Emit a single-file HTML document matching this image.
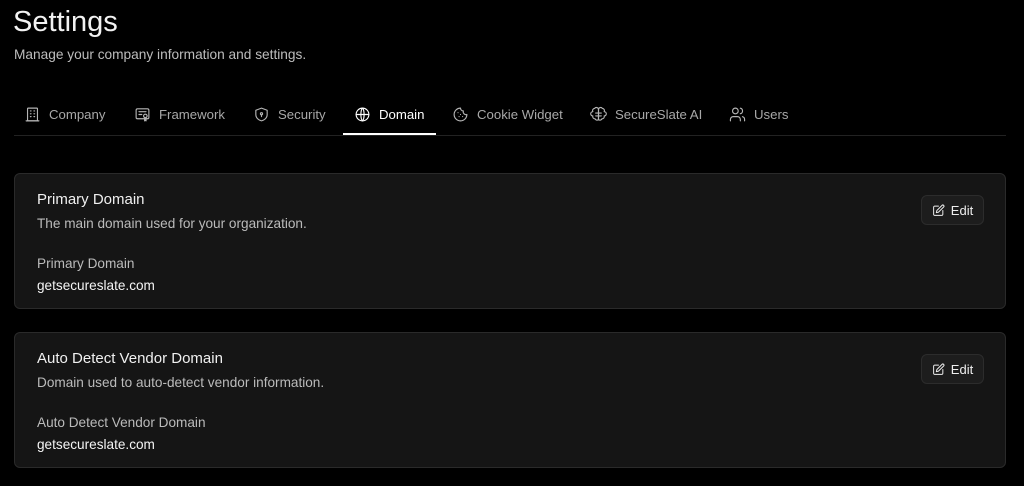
<!DOCTYPE html>
<html><head><meta charset="utf-8"><style>
*{margin:0;padding:0;box-sizing:border-box}
body{width:1024px;height:486px;background:#000;font-family:"Liberation Sans",sans-serif;color:#fff;overflow:hidden;position:relative}
.abs{position:absolute;white-space:nowrap}
h1{position:absolute;left:13px;top:6px;font-size:29px;font-weight:400;color:#f2f2f2}
.sub{left:14px;top:47px;font-size:13.7px;color:#bdbdbd}
.tabline{position:absolute;left:14px;width:992px;top:135px;height:1px;background:#222}
.tab{position:absolute;top:106px;font-size:13.2px;color:#a8a8a8;display:flex;align-items:center;gap:8px}
.tab svg{width:17px;height:17px;fill:none;stroke:#b5b5b5;stroke-width:1.6;stroke-linecap:round;stroke-linejoin:round}
.tab.active{color:#fff}.tab.active svg{stroke:#fff}
.ul{position:absolute;left:343px;width:93px;top:133px;height:2px;background:#fff}
.card{position:absolute;left:14px;width:992px;height:136px;background:#151515;border:1px solid #2a2a2a;border-radius:6px}
.card .t{left:22px;top:17px;font-size:15px;color:#f0f0f0}
.card .d{left:22px;top:42px;font-size:13.6px;color:#bbb}
.card .l{left:22px;top:82px;font-size:13.6px;color:#bbb}
.card .v{left:22px;top:104px;font-size:13.6px;color:#f5f5f5}
.edit{position:absolute;left:906px;top:21px;width:63px;height:30px;background:#1d1d1d;border:1px solid #2c2c2c;border-radius:6px;font-size:13px;color:#eee;display:flex;align-items:center;justify-content:center;gap:6px}
.edit svg{width:13px;height:13px;fill:none;stroke:#eee;stroke-width:1.8;stroke-linecap:round;stroke-linejoin:round}
</style></head><body>
<h1>Settings</h1>
<div class="abs sub">Manage your company information and settings.</div>
<div class="tabline"></div>
<div class="tab" style="left:24px"><svg viewBox="0 0 24 24"><rect x="5" y="3" width="14" height="18" rx="1"/><path d="M9 7h1M14 7h1M9 11h1M14 11h1M9 15h1M14 15h1M3 21h18"/></svg>Company</div>
<div class="tab" style="left:134px"><svg viewBox="0 0 24 24"><rect x="3" y="4" width="18" height="14" rx="2"/><path d="M7 8h10M7 12h4"/><circle cx="16" cy="14" r="2.5"/><path d="M15 17v4l1-1 1 1v-4"/></svg>Framework</div>
<div class="tab" style="left:253px"><svg viewBox="0 0 24 24"><path d="M12 3l8 3v6c0 5-4 8-8 9-4-1-8-4-8-9V6z"/><circle cx="12" cy="11" r="1.5"/><path d="M12 12.5v2.5"/></svg>Security</div>
<div class="tab active" style="left:354px"><svg viewBox="0 0 24 24"><circle cx="12" cy="12" r="9"/><path d="M3 12h18M12 3c3 3 3 15 0 18M12 3c-3 3-3 15 0 18"/></svg>Domain</div>
<div class="tab" style="left:452px"><svg viewBox="0 0 24 24"><path d="M12 3a9 9 0 1 0 9 9 4 4 0 0 1-5-5 4 4 0 0 1-4-4z"/><path d="M8.5 9.5h.01M10 15h.01M15 15h.01M12 12h.01"/></svg>Cookie Widget</div>
<div class="tab" style="left:590px"><svg viewBox="0 0 24 24"><path d="M12 5a3 3 0 0 0-5.5-1.5A3 3 0 0 0 4 8a3 3 0 0 0 0 6 3 3 0 0 0 3 4 3 3 0 0 0 5 1zM12 5a3 3 0 0 1 5.5-1.5A3 3 0 0 1 20 8a3 3 0 0 1 0 6 3 3 0 0 1-3 4 3 3 0 0 1-5 1z"/><path d="M12 5v14M8 10h8M8 14h8"/></svg>SecureSlate AI</div>
<div class="tab" style="left:729px"><svg viewBox="0 0 24 24"><circle cx="9" cy="7" r="4"/><path d="M2 21v-2a4 4 0 0 1 4-4h6a4 4 0 0 1 4 4v2M16 3.1a4 4 0 0 1 0 7.8M22 21v-2a4 4 0 0 0-3-3.9"/></svg>Users</div>
<div class="ul"></div>

<div class="card" style="top:173px">
<div class="abs t">Primary Domain</div>
<div class="abs d">The main domain used for your organization.</div>
<div class="abs l">Primary Domain</div>
<div class="abs v">getsecureslate.com</div>
<div class="edit"><svg viewBox="0 0 24 24"><path d="M12 4H5a2 2 0 0 0-2 2v13a2 2 0 0 0 2 2h13a2 2 0 0 0 2-2v-7"/><path d="M18.5 2.5a2.1 2.1 0 0 1 3 3L12 15l-4 1 1-4z"/></svg>Edit</div>
</div>
<div class="card" style="top:332px">
<div class="abs t">Auto Detect Vendor Domain</div>
<div class="abs d">Domain used to auto-detect vendor information.</div>
<div class="abs l">Auto Detect Vendor Domain</div>
<div class="abs v">getsecureslate.com</div>
<div class="edit"><svg viewBox="0 0 24 24"><path d="M12 4H5a2 2 0 0 0-2 2v13a2 2 0 0 0 2 2h13a2 2 0 0 0 2-2v-7"/><path d="M18.5 2.5a2.1 2.1 0 0 1 3 3L12 15l-4 1 1-4z"/></svg>Edit</div>
</div>
</body></html>
